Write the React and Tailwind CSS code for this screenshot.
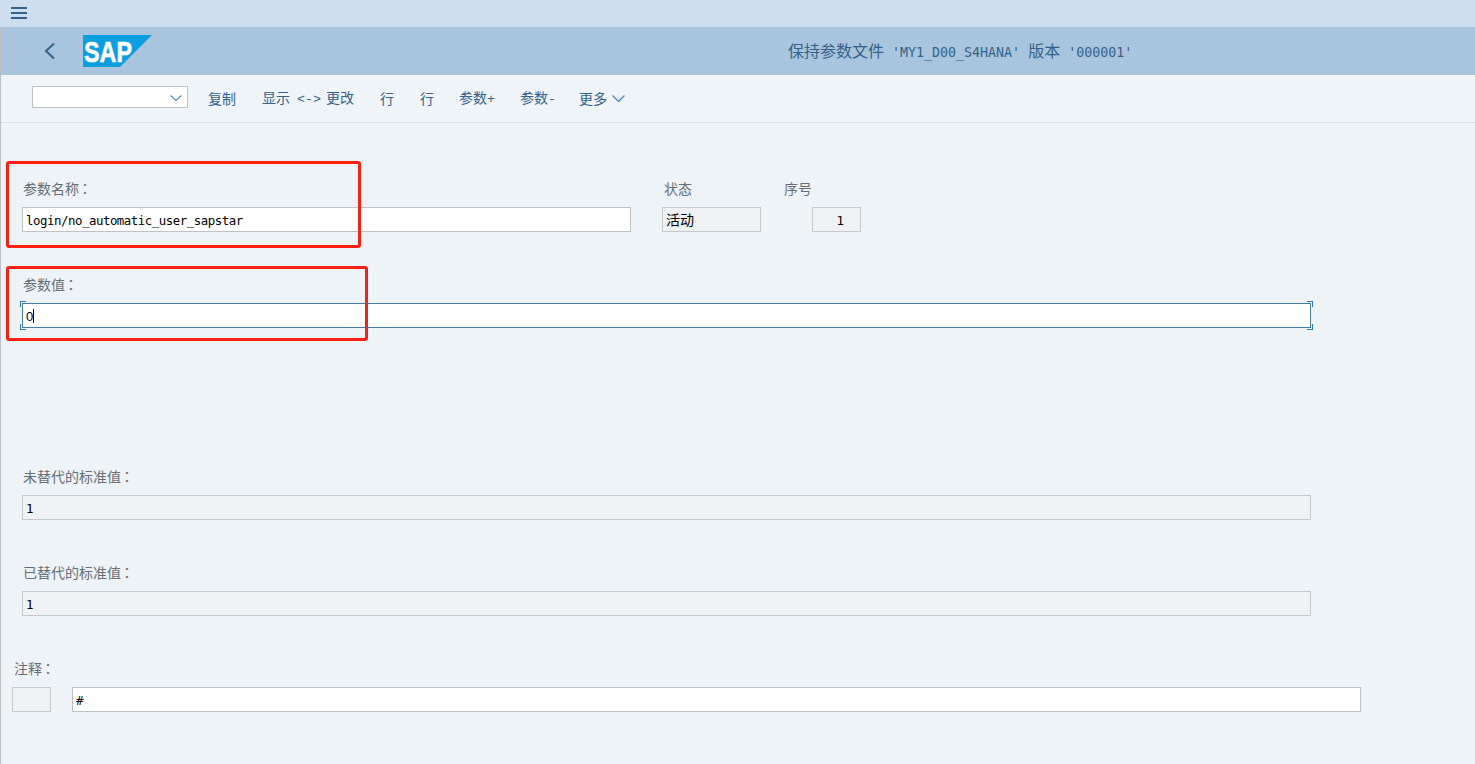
import React from "react";

const cjk = "font-['Noto_Sans_CJK_SC','Noto_Sans_CJK_JP',sans-serif]";
const mono = "font-['DejaVu_Sans_Mono','Noto_Sans_CJK_SC',monospace]";

function Colon() {
  return <span className="font-['Noto_Sans_CJK_TC',sans-serif] ml-[-1px]">：</span>;
}

function Label({ children, className = "" }) {
  return <div className={`${cjk} text-[14px] leading-[20px] text-[#666d74] ${className}`}>{children}</div>;
}

function Field({ children, readOnly, className = "" }) {
  return (
    <div className={`h-[25px] border flex items-center pl-[3px] ${readOnly ? "bg-[#f0f1f3] border-[#c6c9cb]" : "bg-white border-[#bfc2c4]"} ${className}`}>
      {children}
    </div>
  );
}

function Value({ children }) {
  return <span className={`${mono} text-[12.4px] tracking-[-0.47px] leading-[16px] pt-[2px] text-black whitespace-pre`}>{children}</span>;
}

function ToolItem({ children, className = "" }) {
  return <span className={`${cjk} text-[14px] leading-[20px] text-[#346187] whitespace-pre mt-[2px] ${className}`}>{children}</span>;
}

function Sign({ children, className = "" }) {
  return <span className={`font-['Liberation_Mono',monospace] text-[13.33px] ${className}`}>{children}</span>;
}

function Corners() {
  const c = "absolute w-[6px] h-[6px] border-[#2f78b5]";
  return (
    <>
      <span className={`${c} left-[-3px] top-[-3px] border-l border-t`} />
      <span className={`${c} left-[-3px] bottom-[-3px] border-l border-b`} />
      <span className={`${c} right-[-3px] top-[-3px] border-r border-t`} />
      <span className={`${c} right-[-3px] bottom-[-3px] border-r border-b`} />
    </>
  );
}

export default function App() {
  return (
    <div className="w-[1475px] h-[764px] overflow-hidden bg-[#eef3f8] flex flex-col relative">
      <div className="h-[27px] bg-[#cddef0] flex items-center pl-[11px] shrink-0">
        <svg width="16" height="12" viewBox="0 0 16 12" className="text-[#346187] mb-[2px]">
          <path d="M0 1h16M0 6h16M0 11h16" stroke="currentColor" strokeWidth="2" fill="none" />
        </svg>
      </div>

      <div className="flex-1 flex flex-col border-l border-l-[#bdbfc2] min-h-0">
        <div className="h-[48px] bg-[#a9c5de] flex items-center shrink-0">
          <svg width="12" height="18" viewBox="0 0 12 18" className="ml-[43px] text-[#346187]">
            <path d="M10 1.5 2 9l8 7.5" stroke="currentColor" strokeWidth="2" fill="none" />
          </svg>
          <svg width="69" height="32" viewBox="0 0 69 32" className="ml-[27px]">
            <polygon points="0,0 69,0 37,32 0,32" fill="#0a9fe0" />
            <text x="1" y="27" fill="#ffffff" stroke="#ffffff" strokeWidth="0.6" fontFamily="Liberation Sans, sans-serif" fontWeight="700" fontSize="29" textLength="48" lengthAdjust="spacingAndGlyphs">SAP</text>
          </svg>
          <div className={`ml-[636px] ${cjk} text-[16px] leading-[22px] text-[#346187] whitespace-pre`}>
            保持参数文件<span className={`${mono} text-[13.3px]`}> 'MY1_D00_S4HANA' </span>版本<span className={`${mono} text-[13.3px]`}> '000001'</span>
          </div>
        </div>

        <div className="h-[48px] border-b border-b-[#d6e4f1] flex items-center pl-[31px] pb-[3px] shrink-0 bg-[#eff4f9]">
          <div className="w-[156px] h-[22px] bg-white border border-[#bfc2c4] flex items-center justify-end pr-[5px]">
            <svg width="12" height="6" viewBox="0 0 12 6" className="text-[#5a8bb4] mt-[2px]">
              <path d="M.5.5 6 5.500 11.500.5" stroke="currentColor" strokeWidth="1.1" fill="none" />
            </svg>
          </div>
          <ToolItem className="ml-[20px]">复制</ToolItem>
          <ToolItem className="ml-[26px] flex items-baseline">
            显示<Sign className="ml-[7px] mr-[5px]">&lt;-&gt;</Sign>更改
          </ToolItem>
          <ToolItem className="ml-[26px]">行</ToolItem>
          <ToolItem className="ml-[26px]">行</ToolItem>
          <ToolItem className="ml-[25px] flex items-baseline">参数<Sign>+</Sign></ToolItem>
          <ToolItem className="ml-[25px] flex items-baseline">参数<Sign>-</Sign></ToolItem>
          <ToolItem className="ml-[23px]">更多</ToolItem>
          <svg width="13" height="7" viewBox="0 0 13 7" className="ml-[5px] mt-[2px] text-[#3f86c4]">
            <path d="M.5.5l6 6 6-6" stroke="currentColor" strokeWidth="1.2" fill="none" />
          </svg>
        </div>

        <div className="flex-1 flex flex-col pl-[21px] pt-[55px]">
          <div className="flex">
            <div className="w-[609px]">
              <Label className="ml-[1px]">参数名称<Colon /></Label>
              <Field className="mt-[9px] w-[609px]"><Value>login/no_automatic_user_sapstar</Value></Field>
            </div>
            <div className="w-[99px] ml-[31px]">
              <Label className="ml-[2px]">状态</Label>
              <Field readOnly className={`mt-[9px] ${cjk} text-[14px] text-black`}>活动</Field>
            </div>
            <div className="ml-[23px] w-[77px] flex flex-col">
              <Label>序号</Label>
              <Field readOnly className="mt-[9px] ml-[28px] w-[49px] justify-center pl-[7px]"><Value>1</Value></Field>
            </div>
          </div>

          <Label className="ml-[1px] mt-[42px]">参数值<Colon /></Label>
          <div className="relative mt-[9px] w-[1289px] h-[25px] bg-white border border-[#427cac] flex items-center pl-[3px]">
            <Corners />
            <span className="font-['Liberation_Sans',sans-serif] text-[13px] leading-[16px] pt-[2px] text-black">0</span>
            <span className="w-px h-[14px] bg-black mt-[1px]" />
          </div>

          <Label className="ml-[1px] mt-[138px]">未替代的标准值<Colon /></Label>
          <Field readOnly className="mt-[9px] w-[1289px]"><Value>1</Value></Field>

          <Label className="ml-[1px] mt-[42px]">已替代的标准值<Colon /></Label>
          <Field readOnly className="mt-[9px] w-[1289px]"><Value>1</Value></Field>

          <Label className="ml-[-8px] mt-[42px]">注释<Colon /></Label>
          <div className="flex mt-[9px] ml-[-10px]">
            <Field readOnly className="w-[39px]" />
            <Field className="ml-[21px] w-[1289px]"><Value>#</Value></Field>
          </div>
        </div>
      </div>

      <div className="absolute left-[6px] top-[161px] w-[355px] h-[87px] border-[3px] border-[#fb1f14] rounded-[3px]" />
      <div className="absolute left-[6px] top-[266px] w-[362px] h-[75px] border-[3px] border-[#fb1f14] rounded-[3px]" />
    </div>
  );
}
